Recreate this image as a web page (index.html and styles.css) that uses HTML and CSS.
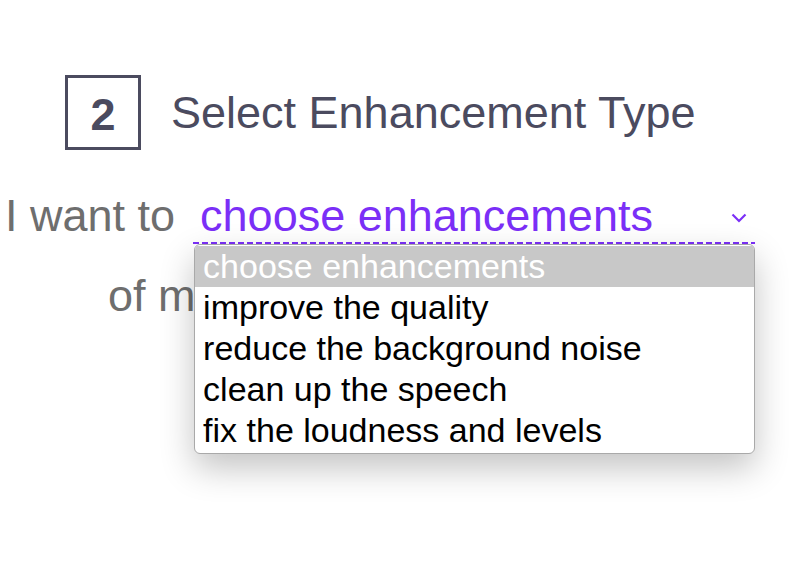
FILE: index.html
```html
<!DOCTYPE html>
<html lang="en">

<head>
    <meta charset="UTF-8">
    <meta name="viewport" content="width=device-width, initial-scale=1.0">
    <title>Select Enhancement Type</title>
    <link rel="stylesheet" href="styles.css">
</head>

<body>
    <div class="step">
        <div class="step-num">2</div>
        <div class="step-title">Select Enhancement Type</div>
    </div>

    <div class="sentence">
        <span class="lead">I want to</span>
        <div class="select">
            <span class="select-value">choose enhancements</span>
            <svg class="chevron" width="16" height="10" viewBox="0 0 16 10">
                <path d="M1.5 1.5 L8 8 L14.5 1.5" fill="none" stroke="#7b2ff7" stroke-width="2.2" />
            </svg>
            <!-- open list -->
            <ul class="options">
                <li class="selected">choose enhancements</li>
                <li>improve the quality</li>
                <li>reduce the background noise</li>
                <li>clean up the speech</li>
                <li>fix the loudness and levels</li>
            </ul>
        </div>
    </div>

    <div class="sentence second">of my recording.</div>
</body>

</html>
```

FILE: styles.css
```css
ul {
    padding: 0;
    margin: 0;
    list-style: none;
}

html,
body {
    height: 100%;
}

body {
    margin: 0;
    font-family: "Liberation Sans", Arial, sans-serif;
    background-color: #fff;
}

.step {
    display: flex;
    align-items: center;
    padding: 75px 0 0 65px;
}

.step-num {
    width: 76px;
    height: 75px;
    box-sizing: border-box;
    border: 3px solid #4b4b5f;
    display: flex;
    align-items: center;
    justify-content: center;
    font-size: 45px;
    font-weight: bold;
    color: #4b4b5f;
    padding-top: 4px;
}

.step-title {
    margin-left: 30px;
    font-size: 45px;
    color: #4b4b5f;
}

.sentence {
    display: flex;
    align-items: flex-start;
    margin-top: 41px;
    padding-left: 5px;
    font-size: 45px;
    line-height: 50px;
    color: #6e6e6e;
}

.sentence .lead {
    margin-right: 18px;
}

.select {
    position: relative;
    width: 562px;
    display: flex;
    justify-content: space-between;
    align-items: center;
    box-sizing: border-box;
    padding: 0 8px 3px 7px;
    color: #7b2ff7;
    background: repeating-linear-gradient(90deg, #7b2ff7 0 6px, transparent 6px 9px) left bottom / 100% 2.5px no-repeat;
}

.select .chevron {
    margin-top: 3px;
}

.options {
    position: absolute;
    top: 100%;
    left: 1px;
    right: 0;
    padding: 1px 0 2px;
    background-color: #fff;
    border: 1px solid #a9a9a9;
    border-radius: 6px;
    box-shadow: 0 14px 34px rgba(0, 0, 0, 0.24);
    font-size: 34px;
    line-height: 41px;
    color: #000;
    overflow: hidden;
}

.options li {
    padding: 0 8px;
    white-space: nowrap;
}

.options li.selected {
    background-color: #c8c8c8;
    color: #fff;
}

.sentence.second {
    margin-top: 27px;
    padding-left: 108px;
}
```
